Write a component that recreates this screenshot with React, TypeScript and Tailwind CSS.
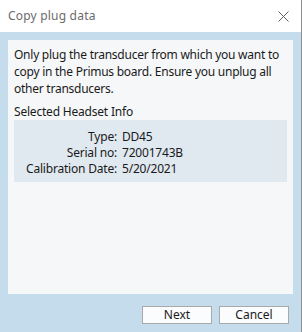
const uiFont = "font-['Segoe_UI','Noto_Sans','Open_Sans',sans-serif]";

function CloseIcon() {
  return (
    <svg width="11" height="11" viewBox="0 0 11 11" fill="none">
      <path d="M0.5 0.5 L10.5 10.5 M10.5 0.5 L0.5 10.5" stroke="#5f5f5f" strokeWidth="1" />
    </svg>
  );
}

const rows = [
  { label: "Type:", value: "DD45" },
  { label: "Serial no:", value: "72001743B" },
  { label: "Calibration Date:", value: "5/20/2021" },
];

export default function App() {
  return (
    <div className={`w-[302px] h-[332px] flex flex-col bg-white border-r border-[#8f8f8f] ${uiFont}`}>
      {/* Title bar */}
      <div className="h-[32px] flex items-center justify-between pl-[8px] pr-[12px] bg-white">
        <span className="text-[12px] tracking-[0.2px] text-[#6b6b6b]">Copy plug data</span>
        <CloseIcon />
      </div>

      {/* Body */}
      <div className="flex-1 flex flex-col bg-[#c4dcec] px-[8px] pt-[8px]">
        <div className="h-[254px] bg-[#f5f7f9] px-[6px] pt-[6px]">
          <p className="text-[12px] leading-[17px] tracking-[-0.25px] whitespace-nowrap text-[#1a1a1a]">
            Only plug the transducer from which you want to
            <br />
            copy in the Primus board. Ensure you unplug all
            <br />
            other transducers.
          </p>
          <p className="mt-[6px] text-[12px] leading-[17px] tracking-[-0.2px] text-[#1a1a1a]">Selected Headset Info</p>
          <div className="bg-[#e0e8f0] pt-[9px] pb-[5px]">
            {rows.map((row) => (
              <div key={row.label} className="flex text-[12px] leading-[16px] tracking-[-0.2px] text-[#1a1a1a]">
                <span className="w-[103px] text-right">{row.label}</span>
                <span className="pl-[5px]">{row.value}</span>
              </div>
            ))}
          </div>
        </div>

        <div className="flex justify-end gap-[7px] pt-[12px] pr-[4px]">
          <button className="w-[70px] h-[18px] flex items-center justify-center bg-[#fbfcfd] border border-[#a9a9a9] text-[12px] text-[#1a1a1a]">
            Next
          </button>
          <button className="w-[70px] h-[18px] flex items-center justify-center bg-[#fbfcfd] border border-[#a9a9a9] text-[12px] text-[#1a1a1a]">
            Cancel
          </button>
        </div>
      </div>
    </div>
  );
}
